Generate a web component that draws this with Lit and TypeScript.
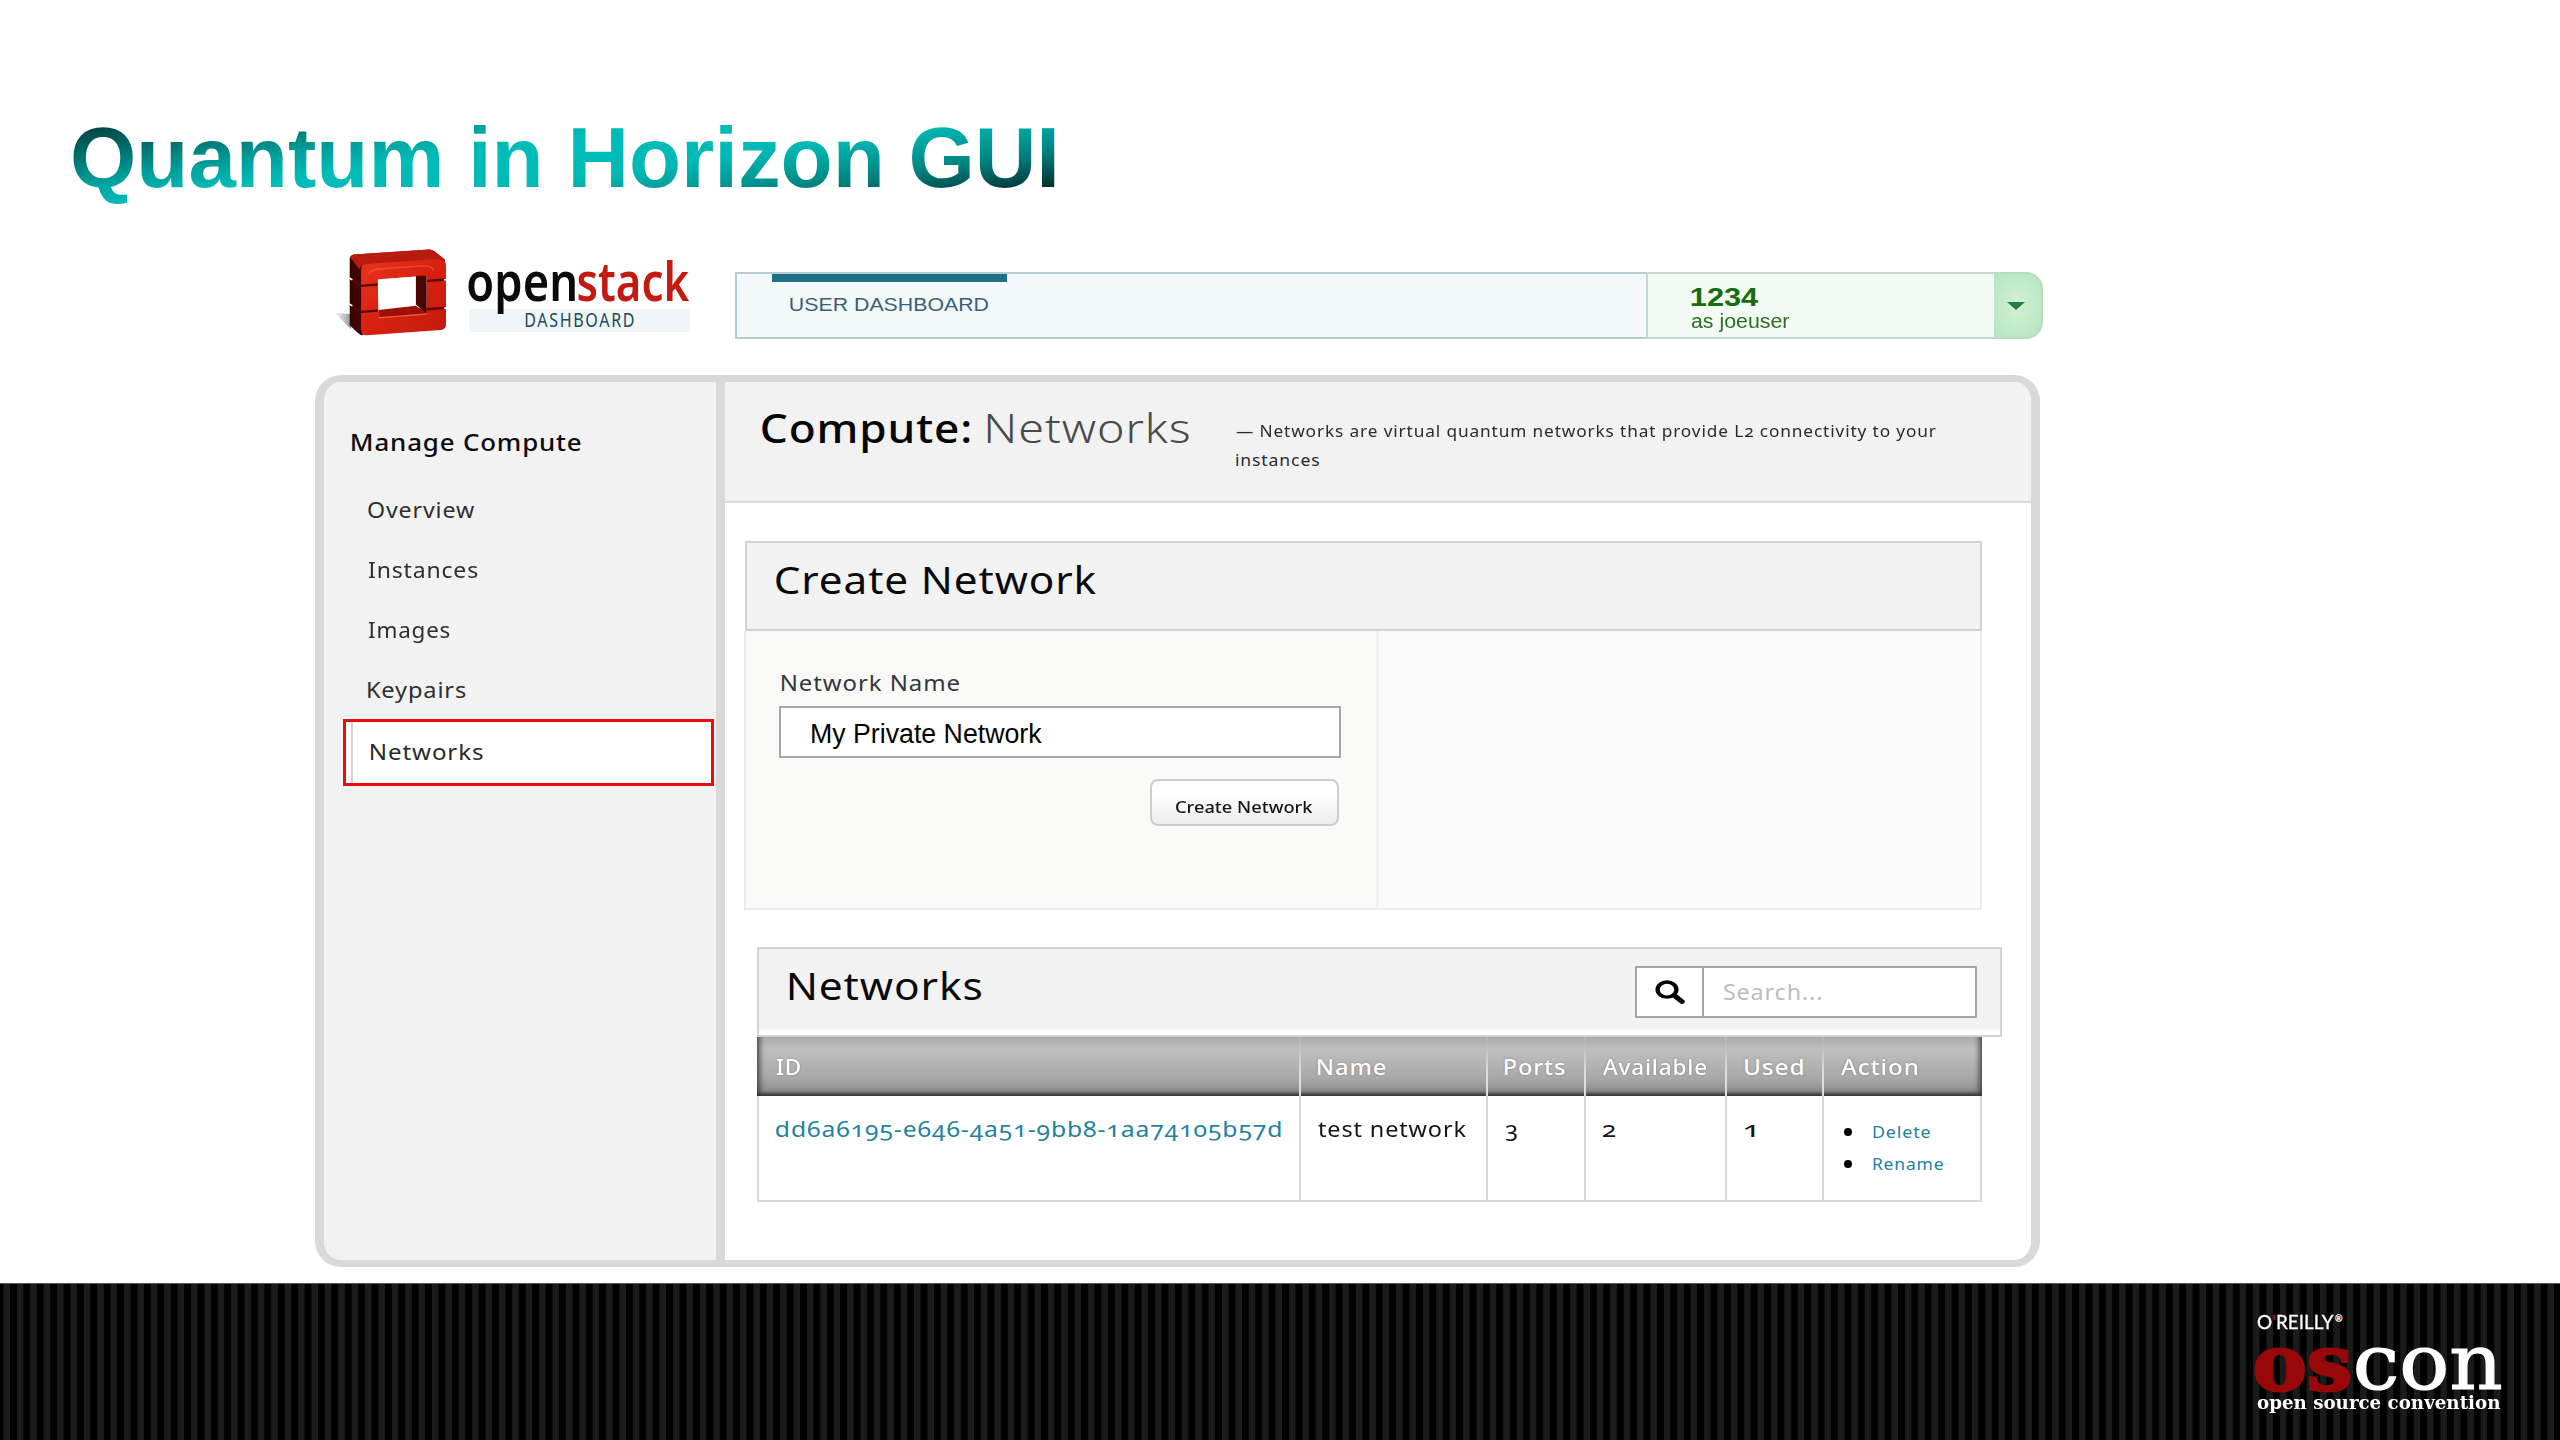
import { LitElement, html, css, svg } from "lit";
import { customElement, property, query } from "lit/decorators.js";

/** A single line of text whose ink is stretched to an exact width. */
@customElement("fit-text")
class FitText extends LitElement {
  @property({ type: Number }) w = 100;
  @query(".line") line!: HTMLElement;

  static styles = css`
    :host { display: block; flex: none; line-height: 1; white-space: nowrap; text-align: left; }
    .line { display: inline-block; transform-origin: 0 50%; vertical-align: top; line-height: inherit; }
  `;

  firstUpdated() {
    const cs = getComputedStyle(this);
    const ctx = document.createElement("canvas").getContext("2d")!;
    ctx.font = `${cs.fontWeight} ${cs.fontSize} ${cs.fontFamily}`;
    const m = ctx.measureText((this.textContent ?? "").trim());
    const lsb = -m.actualBoundingBoxLeft;
    const rsb = m.width - m.actualBoundingBoxRight + (parseFloat(cs.letterSpacing) || 0);
    const ink = this.line.offsetWidth - lsb - rsb;
    const k = this.w / ink;
    this.line.style.transform = `translateX(${-lsb * k}px) scaleX(${k})`;
    this.style.width = `${this.w}px`;
  }

  render() {
    return html`<span class="line" part="line"><slot></slot></span>`;
  }
}

const fit = (text: unknown, w: number, cls = "") =>
  html`<fit-text class=${cls} .w=${w}>${text}</fit-text>`;

const mark = svg`
  <defs>
    <linearGradient id="face" x1="0" y1="0" x2="1" y2="1">
      <stop offset="0" stop-color="#e8341c"/><stop offset=".5" stop-color="#d92010"/><stop offset="1" stop-color="#c01a0c"/>
    </linearGradient>
    <linearGradient id="side" x1="0" y1="0" x2="1" y2="0">
      <stop offset="0" stop-color="#3a0303"/><stop offset="1" stop-color="#8f0d08"/>
    </linearGradient>
    <linearGradient id="shade" x1="0" y1="0" x2="1" y2="0">
      <stop offset="0" stop-color="#b5bcbc" stop-opacity=".2"/><stop offset="1" stop-color="#8b9393"/>
    </linearGradient>
  </defs>
  <path d="M76 247 L122 250 L124 296 Z" fill="url(#shade)"/>
  <path d="M120 86 Q120 74 133 72 L358 57 Q366 57 372 62 L405 88 L405 110 L160 130 L160 314 Q150 314 143 306 L120 284 Z" fill="url(#side)"/>
  <path d="M133 72 L358 57 Q366 57 372 62 L403 86 L160 106 Q150 108 150 118 L122 82 Q126 73 133 72Z" fill="#b81a0e"/>
  <path fill-rule="evenodd" d="M154 120 Q154 103 170 101 L385 86 Q408 86 408 106 L408 280 Q408 297 392 298 L172 314 Q154 314 154 298 Z M206 146 L206 243 L350 231 L350 136 Z" fill="url(#face)"/>
  <path d="M204 148 L318 138 L318 222 L206 234 Z" fill="#fff"/>
  <path d="M318 137 L350 135 L350 250 L318 222 Z" fill="#4a0504"/>
  <path d="M206 238 L318 226 L350 250 L212 262 Z" fill="#9c1008"/>
  <path d="M206 262 L352 250" stroke="#f0604c" stroke-width="4" fill="none"/>
  <path d="M176 132 Q186 118 204 116 L340 106 Q364 106 372 120" stroke="#f25a42" stroke-width="5" fill="none" opacity=".6"/>
  <path d="M119 142 L154 166 L204 162 M119 220 L154 244 L204 240 M352 151 L408 147 M352 236 L408 232" stroke="#5a0503" stroke-width="7" fill="none"/>
  <path d="M116 142 L128 148 M116 220 L128 226 M402 148 L411 147 M402 233 L411 232" stroke="#fff" stroke-width="5"/>
`;

@customElement("app-root")
class AppRoot extends LitElement {
  static styles = css`
    :host { display: block; }
    * { box-sizing: border-box; }
    .slide { width: 2560px; height: 1440px; background: #fff; display: flex; flex-direction: column; overflow: hidden; font-family: "Noto Sans", "Open Sans", sans-serif; color: #222; }
    .title { margin: 0; padding: 108px 0 0 73px; height: 247px; flex: none; font: bold 85.3px/100px "Liberation Sans", Arial, sans-serif; }
    .title fit-text { line-height: 100px; }
    .title fit-text::part(line) { color: transparent; background: linear-gradient(171.6deg, #003c3c 7%, #00a19d 32%, #00bcb8 42%, #00b9b6 59%, #009b97 69%, #007f7c 77%, #002c2e 91.5%); -webkit-background-clip: text; background-clip: text; }

    .top { flex: none; height: 128px; padding-left: 333px; display: flex; align-items: flex-start; }
    .mark { width: 117px; height: 92px; flex: none; }
    .brand { margin: 5px 45px 0 17px; width: 223px; flex: none; }
    .word { display: flex; gap: 3px; font-size: 55px; font-weight: 600; height: 57px; padding-left: 1px; }
    .open { color: #0a0a0a; }
    .stack { color: #c31a12; }
    .board { height: 23px; margin-left: 2px; padding: 2px 0 0 56px; background: #eff6fa; font-size: 19px; letter-spacing: 2px; color: #24465a; }

    .nav { margin-top: 25px; width: 1308px; height: 67px; display: flex; font-family: "Liberation Sans", Arial, sans-serif; flex: none; }
    .tabs { flex: 1; border: 2px solid #b5ccd4; border-right: 0; background: #f3f8fa; padding-left: 35px; }
    .tab { width: 235px; height: 63px; border-top: 8px solid #20708a; padding: 14px 0 0 18px; font-size: 18.7px; color: #3c5f76; }
    .user { width: 348px; border: 2px solid #c3d9cd; border-right: 0; background: #f3f9f3; padding: 10px 0 0 43px; color: #1a6b12; }
    .tenant { font-size: 26px; font-weight: bold; color: #176c0e; }
    .who { font-size: 19.5px; margin-top: 2px; color: #2c6e24; }
    .drop { width: 49px; border: 2px solid #b9dcc0; border-left: 0; border-radius: 0 17px 17px 0; background: radial-gradient(#d2f2d7, #b5e4bd); display: flex; align-items: center; justify-content: center; }
    .tri { border: 9px solid transparent; border-top: 8px solid #24803a; border-bottom: 0; margin-right: 3px; }

    .panel { flex: none; margin-left: 315px; width: 1725px; height: 892px; border: solid #d9d9d9; border-width: 7px 9px; border-radius: 26px; display: flex; overflow: hidden; letter-spacing: 0.05em; }
    .side { width: 401px; flex: none; background: #f2f2f2; border-right: 9px solid #d9d9d9; padding-top: 48px; }
    .side-title { font-size: 24.3px; font-weight: 500; color: #0c0c0c; padding-left: 28px; height: 49px; }
    .item { height: 60px; padding: 2px 0 0 44px; display: flex; align-items: center; font-size: 22.3px; color: #2e2e2e; }
    .item.on { height: 67px; width: 371px; margin-left: 19px; border: 3px solid #e60d0d; background: #fff; padding: 0; color: #2a2a2a; }
    .item.on::before { content: ""; width: 2px; align-self: stretch; background: #d4d4d4; margin: 0 18px 0 5px; }

    .main { flex: 1; background: #fff; }
    .head { height: 121px; background: #f2f2f2; border-bottom: 2px solid #dadada; padding: 26px 0 0 37px; display: flex; font-size: 40px; }
    .strong { font-weight: 500; color: #050505; }
    .light { color: #4a4a4a; margin-left: 18px; font-weight: 350; }
    .desc { margin: 15px 0 0 47px; font-size: 16px; display: flex; flex-direction: column; gap: 13px; color: #2c2a30; font-variant-numeric: oldstyle-nums; }

    .create { width: 1237px; margin: 38px 0 0 20px; }
    .create-head { height: 90px; border: 2px solid #d2d2d2; background: #f2f2f2; padding: 17px 0 0 29px; font-size: 38px; color: #0a0a0a; }
    .create-body { height: 279px; border: 2px solid #ebebeb; border-top: 0; margin-left: -1px; display: flex; background: #fbfbfb; }
    .form { width: 633px; background: #f9f9f8; border-right: 3px solid #f1f1f1; padding: 41px 35px 0 33px; }
    .label { font-size: 21.3px; color: #34373b; padding-left: 3px; height: 34px; }
    .input { height: 52px; border: 2px solid #a6a6a6; background: #fff; display: flex; align-items: center; padding: 4px 0 0 31px; font: 27px "Liberation Sans", Arial, sans-serif; letter-spacing: 0; color: #000; }
    .button { width: 189px; height: 47px; margin: 21px 2px 0 auto; border: 2px solid #cdcdcd; border-radius: 8px; background: linear-gradient(#fff 30%, #ececec); display: flex; align-items: center; justify-content: center; padding-top: 9px; font-size: 16.4px; font-weight: 500; letter-spacing: 0; color: #161616; }

    .list { margin: 37px 0 0 32px; width: 1245px; }
    .list-head { height: 90px; border: 2px solid #d2d2d2; background: linear-gradient(#f2f2f2 78px, #fff 84px); padding: 17px 23px 0 30px; display: flex; justify-content: space-between; font-size: 38px; color: #0a0a0a; }
    .search { width: 342px; height: 52px; background: #fff; border: 2px solid #a6a6a6; display: flex; font-size: 21.3px; color: #bdbdbd; }
    .glass { width: 67px; border-right: 2px solid #a6a6a6; display: flex; align-items: center; justify-content: center; }
    .glass svg { width: 30px; height: 24px; }
    .placeholder { padding: 13px 0 0 20px; }
    .grid { display: grid; grid-template-columns: 542px 187px 98px 141px 97px 160px; width: 1225px; }
    .thead { height: 59px; background: linear-gradient(#adadad, #bfbfbf 22%, #a8a8a8 70%, #8e8e8e 92%, #4e4e4e); box-shadow: inset 5px -3px 6px -3px #333, inset -5px -3px 6px -3px #333; font-size: 21.8px; font-weight: 500; color: #fff; text-shadow: 0 0 2px #777; }
    .th { border-left: 2px solid transparent; border-image: linear-gradient(#b4b4b4, #ddd 60%) 1; border-width: 0 0 0 2px; padding: 19px 0 0 17px; }
    .th:first-child { border-image: none; }
    .row { height: 106px; border: solid #d8d8d8; border-width: 0 2px 2px 0; font-size: 21.8px; color: #151515; font-variant-numeric: oldstyle-nums; }
    .td { border-left: 2px solid #d8d8d8; padding: 22px 0 0 17px; }
    .link { color: #2382a0; }
    .actions { display: flex; flex-direction: column; gap: 16px; padding-top: 28px; font-size: 16px; }
    .act { display: flex; align-items: center; gap: 21px; padding-left: 3px; }
    .dot { width: 8px; height: 8px; border-radius: 50%; background: #000; }

    .foot { margin-top: 16px; height: 157px; flex: none; border-top: 1px solid #555; background: repeating-linear-gradient(90deg, #000 0 3px, #1b1b1b 4px 9.6px, #000 10.4px 13.39px); padding: 27px 0 0 2255px; color: #fff; }
    .ore { display: flex; align-items: flex-start; font: 20px Lato, sans-serif; padding-left: 2px; height: 25px; -webkit-text-stroke: 0.3px; }
    .apos { color: #c01212; }
    .reg { font-size: 9px; margin: 2px 0 0 1px; }
    .oscon { display: flex; gap: 6px; font: 77px "DejaVu Serif", serif; height: 58px; padding-left: 1px; }
    .os { color: #980808; font-weight: bold; -webkit-text-stroke: 3px #980808; }
    .con { -webkit-text-stroke: 1.2px #fff; }
    .oscon fit-text { line-height: 54px; }
    .osc { font: bold 17.6px "DejaVu Serif", serif; padding-left: 2px; }
  `;

  private items: [string, number][] = [
    ["Overview", 107], ["Instances", 110], ["Images", 82], ["Keypairs", 98],
  ];
  private columns: [string, number][] = [
    ["ID", 24], ["Name", 68], ["Ports", 60], ["Available", 104], ["Used", 59], ["Action", 76],
  ];

  render() {
    return html`
      <div class="slide">
        <h1 class="title">${fit("Quantum in Horizon GUI", 981)}</h1>
        <div class="top">
          <svg class="mark" viewBox="70 50 350 275">${mark}</svg>
          <div class="brand">
            <div class="word">${fit("open", 107, "open")}${fit("stack", 112, "stack")}</div>
            <div class="board">${fit("DASHBOARD", 109)}</div>
          </div>
          <div class="nav">
            <div class="tabs"><div class="tab">${fit("USER DASHBOARD", 199)}</div></div>
            <div class="user">${fit("1234", 68, "tenant")}${fit("as joeuser", 99, "who")}</div>
            <div class="drop"><div class="tri"></div></div>
          </div>
        </div>
        <div class="panel">
          <div class="side">
            <div class="side-title">${fit("Manage Compute", 229)}</div>
            ${this.items.map(([name, w]) => html`<div class="item">${fit(name, w)}</div>`)}
            <div class="item on">${fit("Networks", 112)}</div>
          </div>
          <div class="main">
            <div class="head">
              ${fit("Compute:", 208, "strong")}${fit("Networks", 201, "light")}
              <div class="desc">
                ${fit("— Networks are virtual quantum networks that provide L2 connectivity to your", 700)}
                ${fit("instances", 83)}
              </div>
            </div>
            <div class="create">
              <div class="create-head">${fit("Create Network", 320)}</div>
              <div class="create-body">
                <div class="form">
                  <div class="label">${fit("Network Name", 177)}</div>
                  <div class="input">${fit("My Private Network", 230)}</div>
                  <div class="button">${fit("Create Network", 139)}</div>
                </div>
              </div>
            </div>
            <div class="list">
              <div class="list-head">
                ${fit("Networks", 192)}
                <div class="search">
                  <div class="glass">
                    <svg viewBox="0 0 70 70" preserveAspectRatio="none">
                      <circle cx="28" cy="28" r="22" fill="none" stroke="#000" stroke-width="10"/>
                      <path d="M45 45 L63 63" stroke="#000" stroke-width="13" stroke-linecap="round"/>
                    </svg>
                  </div>
                  <div class="placeholder">${fit("Search...", 98)}</div>
                </div>
              </div>
              <div class="grid thead">
                ${this.columns.map(([name, w]) => html`<div class="th">${fit(name, w)}</div>`)}
              </div>
              <div class="grid row">
                <div class="td link">${fit("dd6a6195-e646-4a51-9bb8-1aa74105b57d", 505)}</div>
                <div class="td">${fit("test network", 148)}</div>
                <div class="td">${fit("3", 13)}</div>
                <div class="td">${fit("2", 13)}</div>
                <div class="td">${fit("1", 10)}</div>
                <div class="td actions">
                  <div class="act link"><span class="dot"></span>${fit("Delete", 57)}</div>
                  <div class="act link"><span class="dot"></span>${fit("Rename", 71)}</div>
                </div>
              </div>
            </div>
          </div>
        </div>
        <div class="foot">
          <div class="ore">${fit(html`O<span class="apos">'</span>REILLY`, 77)}<span class="reg">®</span></div>
          <div class="oscon">${fit("os", 94, "os")}${fit("con", 145, "con")}</div>
          <div class="osc">${fit("open source convention", 244)}</div>
        </div>
      </div>
    `;
  }
}
